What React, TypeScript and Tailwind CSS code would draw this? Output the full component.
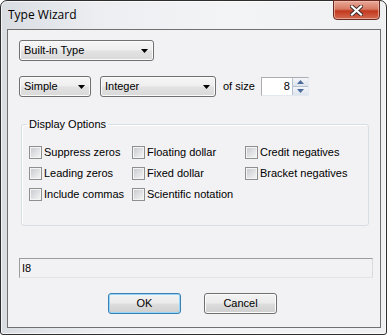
import React from 'react';

const ui = "font-['Liberation_Sans',Arial,sans-serif] text-[11px] text-black";

const Arrow = () => (
  <svg width="7" height="4" viewBox="0 0 7 4" className="shrink-0">
    <path d="M0 0h7L3.5 4z" fill="#000" />
  </svg>
);

const Combo: React.FC<{ label: string; className: string }> = ({ label, className }) => (
  <div
    className={`flex h-[21px] items-center justify-between rounded-[3px] border border-[#707070] bg-[linear-gradient(#f6f6f6_0%,#eeeeee_48%,#e2e2e2_52%,#d9d9d9_100%)] pl-[4px] pr-[5px] shadow-[inset_0_0_0_1px_#fbfbfb] ${className}`}
  >
    <span>{label}</span>
    <Arrow />
  </div>
);

const Check: React.FC<{ label: string }> = ({ label }) => (
  <div className="flex h-[21px] items-center gap-[2px]">
    <div className="flex h-[13px] w-[13px] items-center justify-center border border-[#8e8f8f] bg-[#f4f4f4]">
      <div className="h-[9px] w-[9px] bg-[linear-gradient(135deg,#c9ccd1,#f3f3f3)]" />
    </div>
    <span className="whitespace-nowrap">{label}</span>
  </div>
);

const Spin = () => (
  <div className="flex h-[19px] w-[48px] items-stretch border border-[#abadb3] border-r-[#e3e9ef] border-b-[#e3e9ef] bg-white">
    <span className="flex-1 pr-[2px] text-right leading-[17px]">8</span>
    <div className="flex w-[16px] flex-col border-l border-[#b7c2cf]">
      <div className="flex flex-1 items-center justify-center border-b border-[#b7c2cf] bg-[linear-gradient(#f4f6f9,#dde4ec)]">
        <svg width="7" height="4" viewBox="0 0 7 4"><path d="M3.5 0L7 4H0z" fill="#4c6a9c" /></svg>
      </div>
      <div className="flex flex-1 items-center justify-center bg-[linear-gradient(#f4f6f9,#dde4ec)]">
        <svg width="7" height="4" viewBox="0 0 7 4"><path d="M0 0h7L3.5 4z" fill="#4c6a9c" /></svg>
      </div>
    </div>
  </div>
);

const Button: React.FC<{ label: string; primary?: boolean }> = ({ label, primary }) => (
  <div
    className={`flex h-[21px] w-[73px] items-center justify-center rounded-[3px] border bg-[linear-gradient(#f3f3f3_0%,#ebebeb_48%,#dddddd_52%,#cfcfcf_100%)] ${
      primary
        ? 'border-[#3c7fb1] shadow-[inset_0_0_0_1px_#93d6f7]'
        : 'border-[#707070] shadow-[inset_0_0_0_1px_#fcfcfc]'
    }`}
  >
    {label}
  </div>
);

export default function App() {
  return (
    <div className="h-[335px] w-[387px] overflow-hidden bg-white">
      <div className="relative flex h-[335px] w-[387px] flex-col rounded-t-[7px] rounded-b-[3px] border border-[#2e2e2e] bg-[linear-gradient(90deg,#d9dde2,#eceef1_25%,#f3f4f6_60%,#eef0f2)] shadow-[inset_0_0_0_1px_#ffffffaa]">
        {/* title bar */}
        <div className="flex h-[28px] items-center pl-[7px] font-['Open_Sans','Noto_Sans',sans-serif] text-[12px] text-black">
          Type Wizard
        </div>
        <div className="absolute right-[6px] top-[-1px] flex h-[20px] w-[47px] items-center justify-center rounded-b-[4px] border border-[#6b2a20] bg-[linear-gradient(#e9a898_0%,#d77a63_45%,#c2391f_55%,#d46a4f_100%)] shadow-[inset_0_0_0_1px_#f3c3b5aa]">
          <svg width="13" height="11" viewBox="0 0 13 11">
            <path d="M2 1.5l9 8M11 1.5l-9 8" stroke="#3a2a28" strokeWidth="4" strokeLinecap="square" />
            <path d="M2 1.5l9 8M11 1.5l-9 8" stroke="#fff" strokeWidth="2.2" strokeLinecap="square" />
          </svg>
        </div>

        {/* client area */}
        <div className={`ml-[6px] h-[299px] w-[374px] border border-[#707070] bg-[#f2f1f3] ${ui}`}>
          <div className="ml-[11px] mt-[10px]">
            <Combo label="Built-in Type" className="w-[135px]" />
          </div>

          <div className="ml-[11px] mt-[15px] flex items-center">
            <Combo label="Simple" className="w-[72px]" />
            <Combo label="Integer" className="ml-[9px] w-[116px]" />
            <span className="ml-[7px]">of size</span>
            <div className="ml-[6px]">
              <Spin />
            </div>
          </div>

          <fieldset className="ml-[13px] mt-[21px] h-[108px] w-[348px] rounded-[3px] border border-[#d5dfe5] shadow-[inset_1px_1px_0_#fff]">
            <legend className="ml-[5px] px-[2px] leading-[13px]">Display Options</legend>
            <div className="mt-[11px] grid grid-cols-[103px_113px_auto] pl-[7px]">
              <Check label="Suppress zeros" />
              <Check label="Floating dollar" />
              <Check label="Credit negatives" />
              <Check label="Leading zeros" />
              <Check label="Fixed dollar" />
              <Check label="Bracket negatives" />
              <Check label="Include commas" />
              <Check label="Scientific notation" />
            </div>
          </fieldset>

          <div className="ml-[11px] mt-[32px] flex h-[20px] w-[354px] items-center border border-[#9c9c9c] border-b-[#e3e3e3] border-r-[#dadada] pl-[2px]">
            I8
          </div>

          <div className="ml-[100px] mt-[15px] flex gap-[23px]">
            <Button label="OK" primary />
            <Button label="Cancel" />
          </div>
        </div>
      </div>
    </div>
  );
}
